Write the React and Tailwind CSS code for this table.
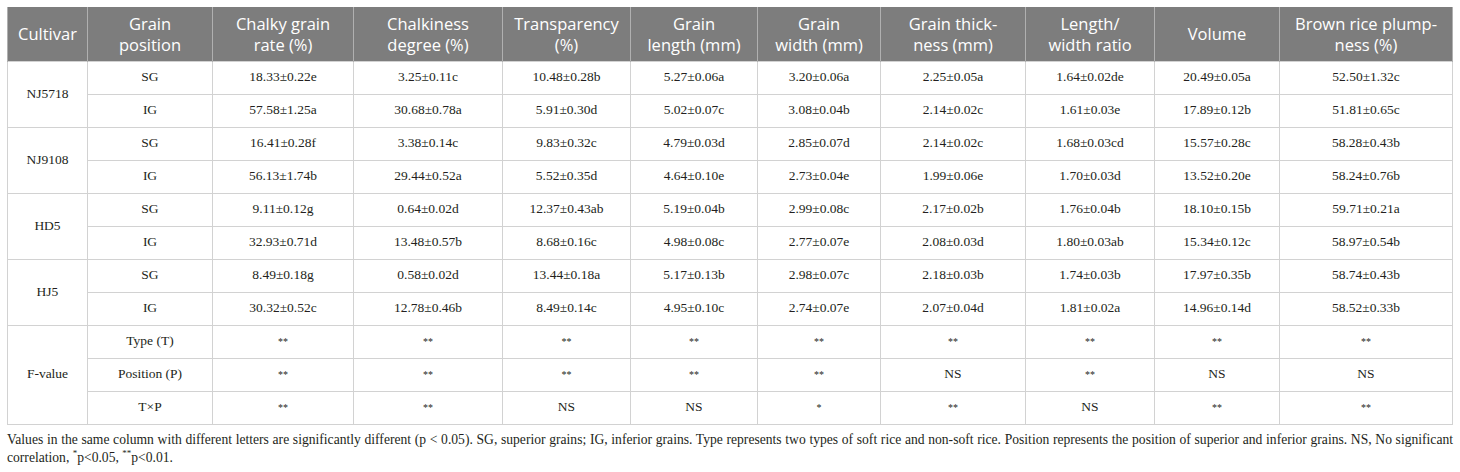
const colWidths = [80, 125, 141, 149, 128, 127, 123, 145, 129, 125, 173];

const headers = [
  ["Cultivar"],
  ["Grain", "position"],
  ["Chalky grain", "rate (%)"],
  ["Chalkiness", "degree (%)"],
  ["Transparency", "(%)"],
  ["Grain", "length (mm)"],
  ["Grain", "width (mm)"],
  ["Grain thick-", "ness (mm)"],
  ["Length/", "width ratio"],
  ["Volume"],
  ["Brown rice plump-", "ness (%)"],
];

const cultivars = [
  {
    name: "NJ5718",
    rows: [
      ["SG", "18.33±0.22e", "3.25±0.11c", "10.48±0.28b", "5.27±0.06a", "3.20±0.06a", "2.25±0.05a", "1.64±0.02de", "20.49±0.05a", "52.50±1.32c"],
      ["IG", "57.58±1.25a", "30.68±0.78a", "5.91±0.30d", "5.02±0.07c", "3.08±0.04b", "2.14±0.02c", "1.61±0.03e", "17.89±0.12b", "51.81±0.65c"],
    ],
  },
  {
    name: "NJ9108",
    rows: [
      ["SG", "16.41±0.28f", "3.38±0.14c", "9.83±0.32c", "4.79±0.03d", "2.85±0.07d", "2.14±0.02c", "1.68±0.03cd", "15.57±0.28c", "58.28±0.43b"],
      ["IG", "56.13±1.74b", "29.44±0.52a", "5.52±0.35d", "4.64±0.10e", "2.73±0.04e", "1.99±0.06e", "1.70±0.03d", "13.52±0.20e", "58.24±0.76b"],
    ],
  },
  {
    name: "HD5",
    rows: [
      ["SG", "9.11±0.12g", "0.64±0.02d", "12.37±0.43ab", "5.19±0.04b", "2.99±0.08c", "2.17±0.02b", "1.76±0.04b", "18.10±0.15b", "59.71±0.21a"],
      ["IG", "32.93±0.71d", "13.48±0.57b", "8.68±0.16c", "4.98±0.08c", "2.77±0.07e", "2.08±0.03d", "1.80±0.03ab", "15.34±0.12c", "58.97±0.54b"],
    ],
  },
  {
    name: "HJ5",
    rows: [
      ["SG", "8.49±0.18g", "0.58±0.02d", "13.44±0.18a", "5.17±0.13b", "2.98±0.07c", "2.18±0.03b", "1.74±0.03b", "17.97±0.35b", "58.74±0.43b"],
      ["IG", "30.32±0.52c", "12.78±0.46b", "8.49±0.14c", "4.95±0.10c", "2.74±0.07e", "2.07±0.04d", "1.81±0.02a", "14.96±0.14d", "58.52±0.33b"],
    ],
  },
  {
    name: "F-value",
    rows: [
      ["Type (T)", "**", "**", "**", "**", "**", "**", "**", "**", "**"],
      ["Position (P)", "**", "**", "**", "**", "**", "NS", "**", "NS", "NS"],
      ["T×P", "**", "**", "NS", "NS", "*", "**", "NS", "**", "**"],
    ],
  },
];

function Cell({ children, ...rest }) {
  const isStar = typeof children === "string" && /^\*+$/.test(children);
  return (
    <td
      {...rest}
      className={`border border-[#d2d2d2] h-[33px] p-0 text-center align-middle ${isStar ? "text-[10px]" : "text-[13.5px]"}`}
    >
      {children}
    </td>
  );
}

export default function App() {
  return (
    <div className="w-[1460px] h-[472px] bg-white pt-[7px] pl-[7px] pr-[7px] font-['Liberation_Serif',serif] text-[#231f20]">
      <table className="border-collapse table-fixed w-[1446px]">
        <colgroup>
          {colWidths.map((w, i) => (
            <col key={i} style={{ width: w }} />
          ))}
        </colgroup>
        <thead>
          <tr className="bg-[#7d7d7d] text-white">
            {headers.map((lines, i) => (
              <th
                key={i}
                className="h-[54px] p-0 font-normal text-center align-middle border-x border-[#b0b0b0] font-['Open_Sans',sans-serif] text-[16.5px] leading-[21px]"
              >
                {lines.map((l) => (
                  <div key={l}>{l}</div>
                ))}
              </th>
            ))}
          </tr>
        </thead>
        <tbody>
          {cultivars.map((g) =>
            g.rows.map((r, ri) => (
              <tr key={g.name + ri}>
                {ri === 0 && <Cell rowSpan={g.rows.length}>{g.name}</Cell>}
                {r.map((v, ci) => (
                  <Cell key={ci}>{v}</Cell>
                ))}
              </tr>
            ))
          )}
        </tbody>
      </table>
      <p className="mt-[6px] text-[13.6px] leading-[18px] text-justify">
        Values in the same column with different letters are significantly different (p &lt; 0.05). SG, superior grains; IG, inferior grains. Type represents two types of soft rice and non-soft rice. Position represents the position of superior and inferior grains. NS, No significant correlation, <span className="align-super text-[9px] leading-none">*</span>p&lt;0.05, <span className="align-super text-[9px] leading-none">**</span>p&lt;0.01.
      </p>
    </div>
  );
}
